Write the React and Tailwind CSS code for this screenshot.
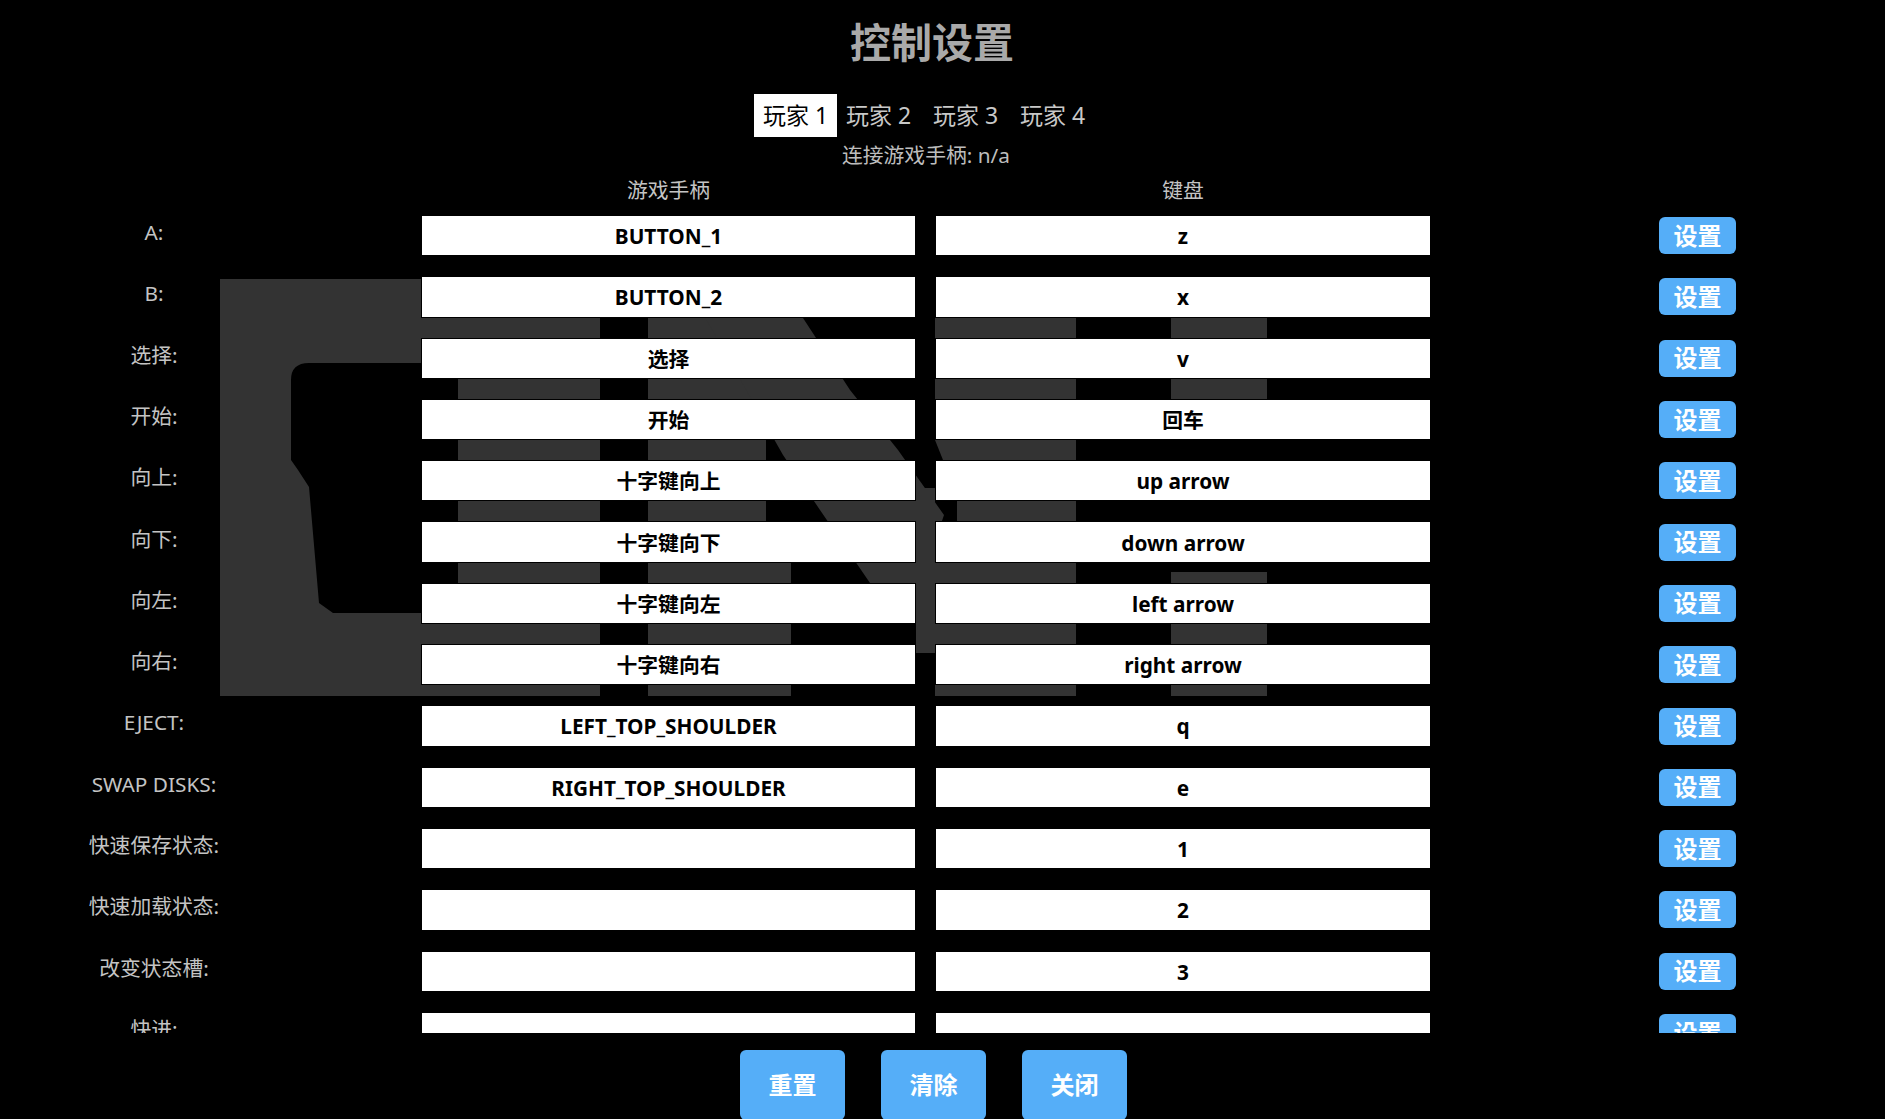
import React from "react";

const rows = [
  ["A:", "BUTTON_1", "z"],
  ["B:", "BUTTON_2", "x"],
  ["选择:", "选择", "v"],
  ["开始:", "开始", "回车"],
  ["向上:", "十字键向上", "up arrow"],
  ["向下:", "十字键向下", "down arrow"],
  ["向左:", "十字键向左", "left arrow"],
  ["向右:", "十字键向右", "right arrow"],
  ["EJECT:", "LEFT_TOP_SHOULDER", "q"],
  ["SWAP DISKS:", "RIGHT_TOP_SHOULDER", "e"],
  ["快速保存状态:", "", "1"],
  ["快速加载状态:", "", "2"],
  ["改变状态槽:", "", "3"],
  ["快进:", "", ""],
  ["倒带:", "", ""],
];

const tabs = ["玩家 1", "玩家 2", "玩家 3", "玩家 4"];

// the dim gamepad picture that sits behind the rows
const PadBackdrop = () => (
  <svg
    className="absolute left-0 top-0 pointer-events-none"
    width="1885"
    height="1119"
    viewBox="0 0 1885 1119"
  >
    <g fill="#333333">
      <path
        fillRule="evenodd"
        d="M220 279 H600 V696 H220 Z M291 380 Q291 363 309 363 H458 V613 H333 L319 603 L309 487 L298 470 L291 460 Z"
      />
      <polygon points="648,280 766,280 766,560 791,560 791,696 648,696" />
      <polygon points="684,280 790,280 803,318 850,390 898,450 944,515 921,583 870,583 820,510 783,455" />
      <rect x="916" y="488" width="19" height="165" />
      <polygon points="935,280 1076,280 1076,696 935,696 935,545 957,521 957,495 935,440" />
      <rect x="1171" y="280" width="96" height="130" />
      <rect x="1171" y="572" width="96" height="124" />
    </g>
  </svg>
);

const Row = ({ label, pad, key2 }) => (
  <div className="flex items-center h-[61.3px]">
    <div className="w-[308px] h-[41px] pb-[6px] flex items-center justify-center text-[20.8px] text-[#c4c4c4]">
      {label}
    </div>
    <div className="ml-[113px] w-[495px] h-[41.3px] pt-[2px] bg-white border border-black flex items-center justify-center text-[20.8px] font-bold text-black">
      {pad}
    </div>
    <div className="ml-[19px] w-[496px] h-[41.3px] pt-[2px] bg-white border border-black flex items-center justify-center text-[20.8px] font-bold text-black">
      {key2}
    </div>
    <button className="ml-[228px] w-[77px] h-[37px] rounded-[6px] bg-[#55aef8] text-white text-[24px] font-bold leading-none">
      设置
    </button>
  </div>
);

export default function App() {
  return (
    <div className="relative h-[1119px] w-[1885px] overflow-hidden bg-black font-[family-name:'Noto_Sans','Noto_Sans_CJK_SC',sans-serif]">
      <PadBackdrop />
      <div className="relative">
        <h1 className="w-[1864px] pt-[18px] text-center text-[41px] leading-[48px] font-bold text-[#a9a9a9]">
          控制设置
        </h1>
        <div className="w-[1848px] mt-[28px] flex justify-center">
          {tabs.map((t, i) => (
            <div
              key={t}
              className={
                i === 0
                  ? "w-[83px] h-[43px] flex items-center justify-center text-[23px] bg-white text-black"
                  : i === 1
                  ? "w-[83px] h-[43px] flex items-center justify-center text-[23px] text-[#c8c8c8]"
                  : "ml-[4px] w-[83px] h-[43px] flex items-center justify-center text-[23px] text-[#c8c8c8]"
              }
            >
              {t}
            </div>
          ))}
        </div>
        <p className="w-[1852px] mt-[6px] text-center text-[20.8px] leading-[24px] text-[#bdbdbd]">
          连接游戏手柄: n/a
        </p>
        <div className="mt-[11px] flex pl-[421px] text-[20.8px] leading-[24px] text-[#c4c4c4]">
          <div className="w-[495px] text-center">游戏手柄</div>
          <div className="ml-[19px] w-[496px] text-center">键盘</div>
        </div>
        <div className="mt-[3px] h-[828px] overflow-hidden">
          {rows.map(([label, pad, key2]) => (
            <Row key={label} label={label} pad={pad} key2={key2} />
          ))}
        </div>
        <div className="w-[1867px] mt-[17px] flex justify-center gap-[36px]">
          {["重置", "清除", "关闭"].map((b) => (
            <button
              key={b}
              className="w-[105px] h-[70px] rounded-[6px] bg-[#55aef8] text-white text-[24px] font-bold"
            >
              {b}
            </button>
          ))}
        </div>
      </div>
    </div>
  );
}
